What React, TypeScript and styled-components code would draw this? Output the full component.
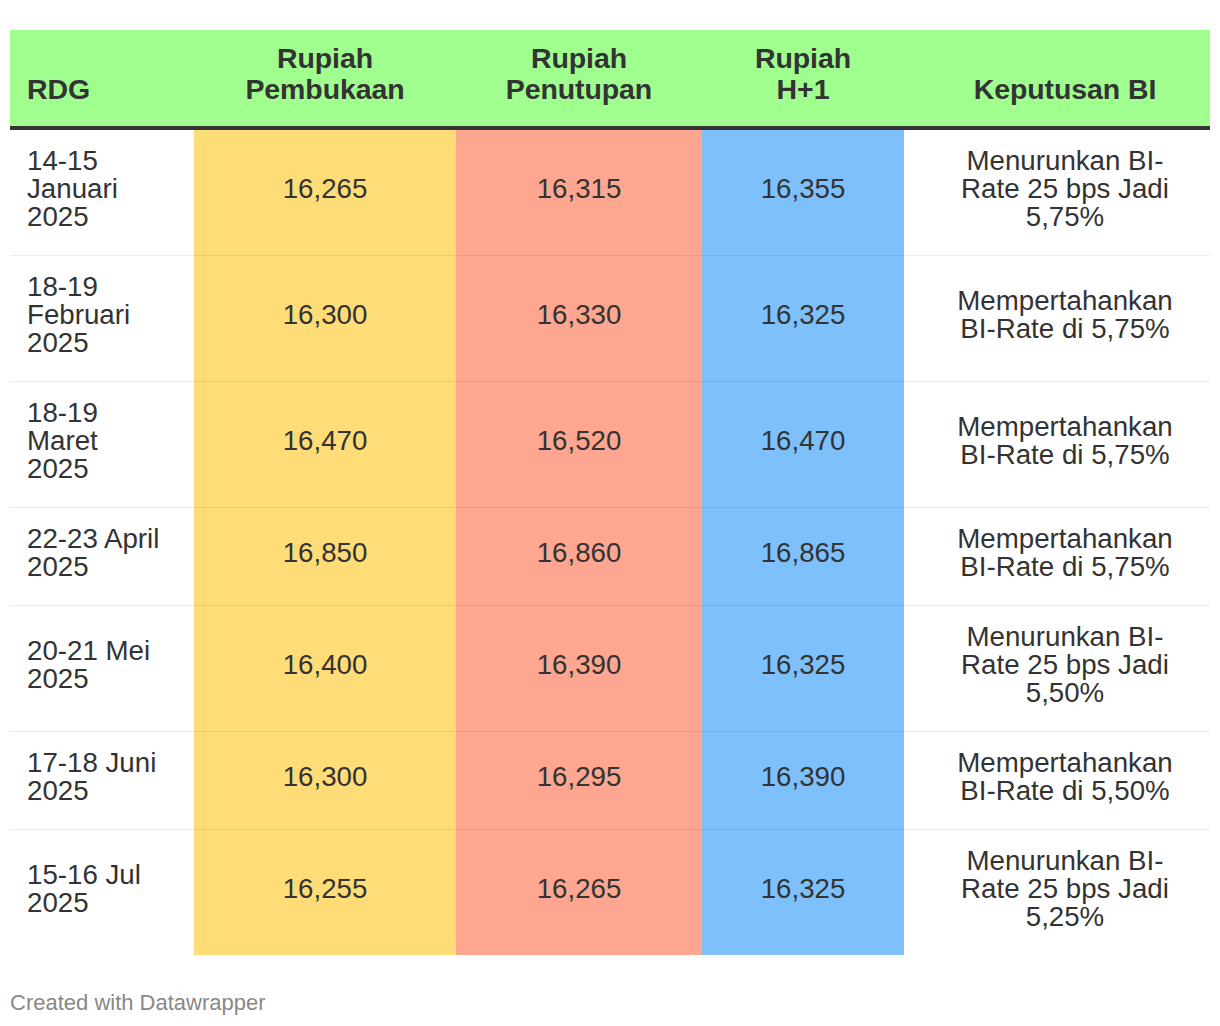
import React from "react";
import styled, { createGlobalStyle } from "styled-components";

const GlobalStyle = createGlobalStyle`
  html, body {
    margin: 0;
    padding: 0;
    background: #ffffff;
  }
  body {
    font-family: "Liberation Sans", Arial, Helvetica, sans-serif;
    color: #333333;
  }
`;

const Page = styled.div`
  width: 1200px;
  padding: 30px 10px 0 10px;
`;

const Table = styled.table`
  width: 1200px;
  table-layout: fixed;
  border-collapse: collapse;
  border-spacing: 0;
`;

const HeadRow = styled.tr`
  background: #a0fe8f;
  border-bottom: 4px solid #333333;
`;

type Align = "left" | "center";

const HeadCell = styled.th<{ $align: Align; $pl: number; $pr: number }>`
  height: 96px;
  box-sizing: border-box;
  padding: 13px ${(p) => p.$pr}px 21px ${(p) => p.$pl}px;
  vertical-align: bottom;
  text-align: ${(p) => p.$align};
  font-size: 28.5px;
  line-height: 31px;
  font-weight: 700;
  color: #333333;
  letter-spacing: -0.1px;
`;

const BodyRow = styled.tr`
  &:not(:last-child) td {
    border-bottom: 1px solid rgba(0, 0, 0, 0.075);
  }
`;

const Cell = styled.td<{ $align: Align; $pl: number; $pr: number; $bg?: string }>`
  padding: 17px ${(p) => p.$pr}px 24px ${(p) => p.$pl}px;
  vertical-align: middle;
  text-align: ${(p) => p.$align};
  background: ${(p) => p.$bg ?? "transparent"};
  font-size: 27.7px;
  line-height: 28px;
  color: #333333;
`;

const Footer = styled.div`
  margin-top: 35px;
  font-size: 22px;
  line-height: 26px;
  color: #888888;
`;

type Column = {
  key: string;
  title: string[];
  width: number;
  align: Align;
  pl: number;
  pr: number;
  bg?: string;
};

const columns: Column[] = [
  { key: "rdg", title: ["RDG"], width: 184, align: "left", pl: 17, pr: 29 },
  { key: "open", title: ["Rupiah", "Pembukaan"], width: 262, align: "center", pl: 10, pr: 10, bg: "#fedc77" },
  { key: "close", title: ["Rupiah", "Penutupan"], width: 246, align: "center", pl: 10, pr: 10, bg: "#fea68f" },
  { key: "next", title: ["Rupiah", "H+1"], width: 202, align: "center", pl: 10, pr: 10, bg: "#7dc0fb" },
  { key: "decision", title: ["Keputusan BI"], width: 306, align: "center", pl: 45, pr: 29 },
];

type Row = { rdg: string; open: string; close: string; next: string; decision: string };

const rows: Row[] = [
  { rdg: "14-15 Januari 2025", open: "16,265", close: "16,315", next: "16,355", decision: "Menurunkan BI-Rate 25 bps Jadi 5,75%" },
  { rdg: "18-19 Februari 2025", open: "16,300", close: "16,330", next: "16,325", decision: "Mempertahankan BI-Rate di 5,75%" },
  { rdg: "18-19 Maret 2025", open: "16,470", close: "16,520", next: "16,470", decision: "Mempertahankan BI-Rate di 5,75%" },
  { rdg: "22-23 April 2025", open: "16,850", close: "16,860", next: "16,865", decision: "Mempertahankan BI-Rate di 5,75%" },
  { rdg: "20-21 Mei 2025", open: "16,400", close: "16,390", next: "16,325", decision: "Menurunkan BI-Rate 25 bps Jadi 5,50%" },
  { rdg: "17-18 Juni 2025", open: "16,300", close: "16,295", next: "16,390", decision: "Mempertahankan BI-Rate di 5,50%" },
  { rdg: "15-16 Jul 2025", open: "16,255", close: "16,265", next: "16,325", decision: "Menurunkan BI-Rate 25 bps Jadi 5,25%" },
];

export default function App() {
  return (
    <>
      <GlobalStyle />
      <Page>
        <Table>
          <colgroup>
            {columns.map((c) => (
              <col key={c.key} style={{ width: c.width }} />
            ))}
          </colgroup>
          <thead>
            <HeadRow>
              {columns.map((c) => (
                <HeadCell key={c.key} $align={c.align} $pl={c.pl} $pr={c.pr}>
                  {c.title.map((line, i) => (
                    <React.Fragment key={i}>
                      {i > 0 && <br />}
                      {line}
                    </React.Fragment>
                  ))}
                </HeadCell>
              ))}
            </HeadRow>
          </thead>
          <tbody>
            {rows.map((r, ri) => (
              <BodyRow key={ri}>
                {columns.map((c) => (
                  <Cell key={c.key} $align={c.align} $pl={c.pl} $pr={c.pr} $bg={c.bg}>
                    {r[c.key as keyof Row]}
                  </Cell>
                ))}
              </BodyRow>
            ))}
          </tbody>
        </Table>
        <Footer>Created with Datawrapper</Footer>
      </Page>
    </>
  );
}
